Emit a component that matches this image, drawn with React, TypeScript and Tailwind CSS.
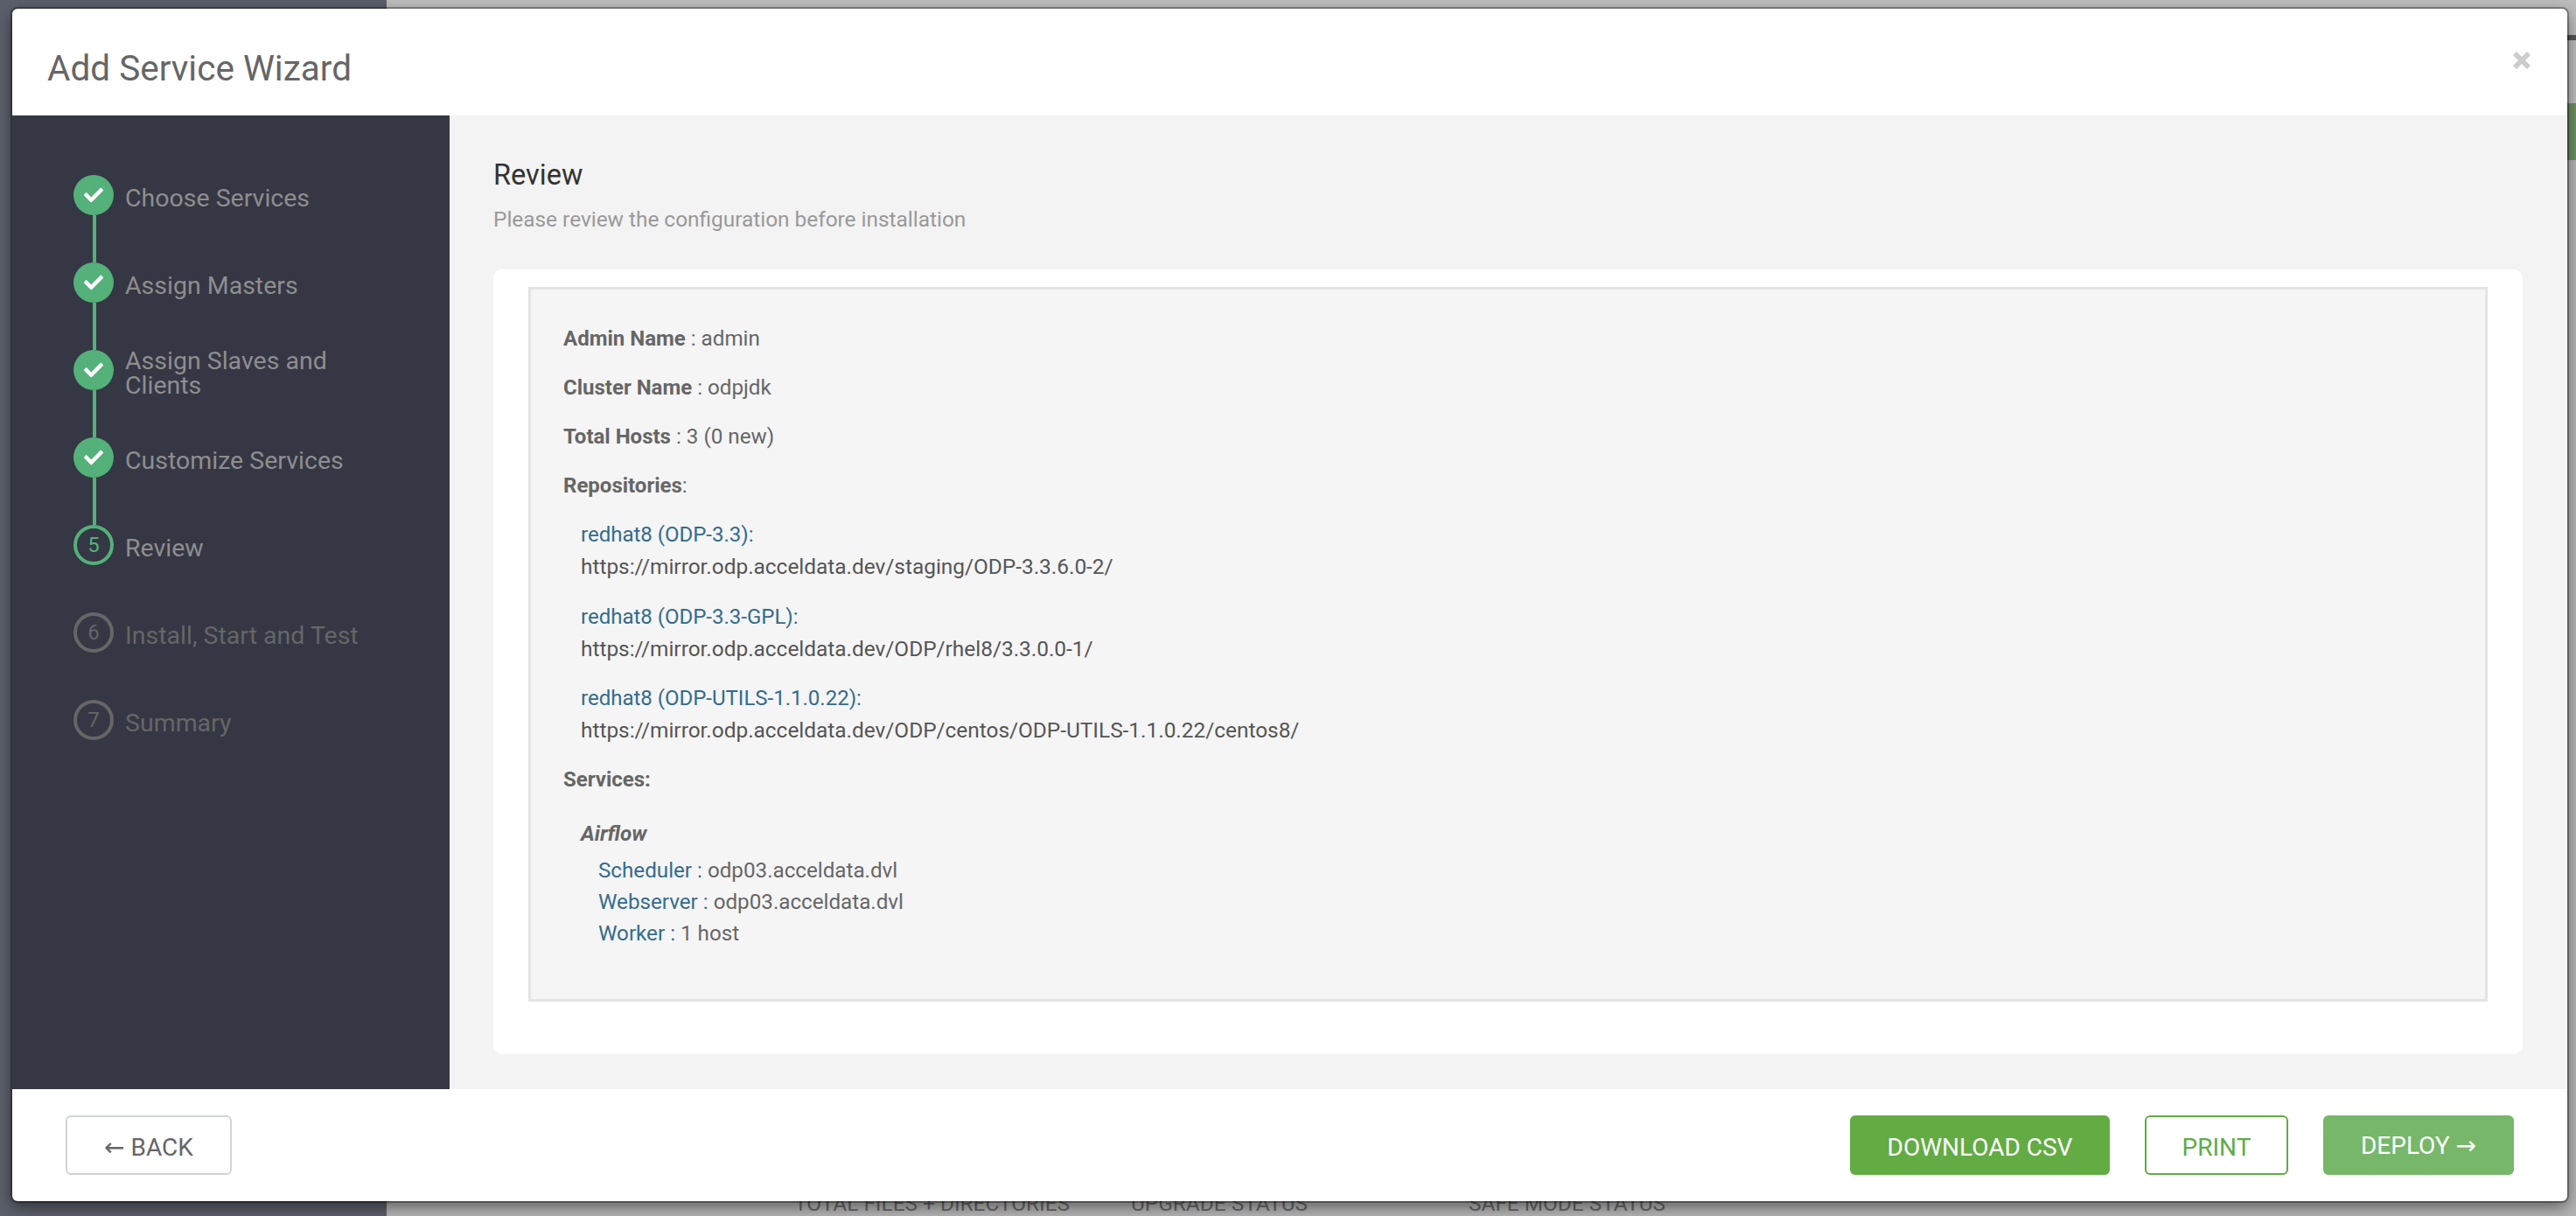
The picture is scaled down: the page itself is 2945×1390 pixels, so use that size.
import React from 'react';
import { FaCheck } from 'react-icons/fa';

const font = { fontFamily: 'Roboto, sans-serif' };
const arrowFont = { fontFamily: '"DejaVu Sans", sans-serif' };

type Step = { n: number; label: string; state: 'done' | 'current' | 'todo' };

const steps: Step[] = [
  { n: 1, label: 'Choose Services', state: 'done' },
  { n: 2, label: 'Assign Masters', state: 'done' },
  { n: 3, label: 'Assign Slaves and Clients', state: 'done' },
  { n: 4, label: 'Customize Services', state: 'done' },
  { n: 5, label: 'Review', state: 'current' },
  { n: 6, label: 'Install, Start and Test', state: 'todo' },
  { n: 7, label: 'Summary', state: 'todo' },
];

const repos = [
  { name: 'redhat8 (ODP-3.3):', url: 'https://mirror.odp.acceldata.dev/staging/ODP-3.3.6.0-2/' },
  { name: 'redhat8 (ODP-3.3-GPL):', url: 'https://mirror.odp.acceldata.dev/ODP/rhel8/3.3.0.0-1/' },
  { name: 'redhat8 (ODP-UTILS-1.1.0.22):', url: 'https://mirror.odp.acceldata.dev/ODP/centos/ODP-UTILS-1.1.0.22/centos8/' },
];

const components = [
  { name: 'Scheduler', value: 'odp03.acceldata.dvl' },
  { name: 'Webserver', value: 'odp03.acceldata.dvl' },
  { name: 'Worker', value: '1 host' },
];

function StepRow({ step, last }: { step: Step; last: boolean }) {
  return (
    <div className="relative flex h-[100px] items-start">
      {step.state === 'done' && (
        <div className="flex h-[46px] w-[46px] shrink-0 items-center justify-center rounded-full bg-[#53b179]">
          <FaCheck size={22} className="text-white" />
        </div>
      )}
      {step.state === 'current' && (
        <div className="flex h-[46px] w-[46px] shrink-0 items-center justify-center rounded-full border-4 border-[#53b179] text-[24px] text-[#53b179]">
          {step.n}
        </div>
      )}
      {step.state === 'todo' && (
        <div className="flex h-[46px] w-[46px] shrink-0 items-center justify-center rounded-full border-4 border-[#666666] text-[24px] text-[#666666]">
          {step.n}
        </div>
      )}
      {step.state === 'done' && !last && (
        <div className="absolute left-[22px] top-[46px] h-[54px] w-1 bg-[#53b179]" />
      )}
      <div
        className={`ml-[13px] mt-3 flex h-[30px] w-[280px] items-center text-[28.5px] leading-[28px] ${
          step.state === 'todo' ? 'text-[#666666]' : 'text-[#8e8e8e]'
        }`}
      >
        <span className="block">{step.label}</span>
      </div>
    </div>
  );
}

export default function App() {
  return (
    <div style={font} className="relative h-[1390px] w-[2945px] overflow-hidden bg-[#bdbdbd]">
      {/* dimmed page behind the modal */}
      <div className="flex h-full">
        <div className="h-full w-[442px] bg-[#5b5f6b]" />
        <div className="flex flex-1 flex-col">
          <div className="flex h-[124px] justify-end">
            <div className="mt-[40px] h-[6px] w-[10px] bg-[#555555]" />
          </div>
          <div className="flex h-[68px] justify-end">
            <div className="w-[12px] bg-[#6b8f60]" />
          </div>
          <div className="flex-1 bg-[#b4b4b4]">
            <div className="ml-[466px] mt-[1179px] flex text-[24.4px] leading-[28px] text-[#666666]">
              <span className="w-[385px]">TOTAL FILES + DIRECTORIES</span>
              <span className="w-[386px]">UPGRADE STATUS</span>
              <span>SAFE MODE STATUS</span>
            </div>
          </div>
        </div>
      </div>
      {/* modal */}
      <div className="absolute left-[14px] top-[10px] flex h-[1363px] w-[2921px] flex-col rounded-[6px] bg-white shadow-[0_0_0_2px_rgba(0,0,0,0.3),0_6px_18px_rgba(0,0,0,0.5)]">
        <div className="relative flex h-[122px] shrink-0 items-center pl-[40px] pt-[15px]">
          <h1 className="text-[40.5px] font-normal text-[#666666]">Add Service Wizard</h1>
          <span className="absolute right-[42px] top-[49px] text-[#cccccc]">
            <svg width="20" height="20" viewBox="0 0 20 20" className="block">
              <path d="M4 0 L10 6 L16 0 L20 4 L14 10 L20 16 L16 20 L10 14 L4 20 L0 16 L6 10 L0 4 Z" fill="currentColor" />
            </svg>
          </span>
        </div>
        <div className="flex min-h-0 flex-1">
          <aside className="w-[500px] shrink-0 bg-[#353744] pl-[70px] pt-[68px]">
            {steps.map((s, i) => (
              <StepRow key={s.n} step={s} last={i === steps.length - 1} />
            ))}
          </aside>
          <main className="flex-1 bg-[#f3f3f3] pl-[50px] pr-[51px] pt-[48px]">
            <h2 className="text-[32.5px] font-normal leading-[40px] text-[#333333]">Review</h2>
            <p className="mt-[16px] text-[24.4px] leading-[30px] text-[#999999]">Please review the configuration before installation</p>
            <div className="mt-[42px] h-[897px] rounded-[10px] bg-white px-[40px] pt-[20px]">
              <div className="h-[817px] border-[3px] border-[#e3e3e3] bg-[#f5f5f5] pl-[37px] pt-[38px] text-[24.2px] leading-[36px] text-[#666666]">
                <p><b className="text-[24px]">Admin Name</b> : admin</p>
                <p className="mt-[20px]"><b className="text-[24px]">Cluster Name</b> : odpjdk</p>
                <p className="mt-[20px]"><b className="text-[24px]">Total Hosts</b> : 3 (0 new)</p>
                <p className="mt-[20px]"><b className="text-[24px]">Repositories</b>:</p>
                <div className="ml-[20px]">
                  {repos.map((r) => (
                    <div key={r.name} className="mt-[19px]">
                      <div className="text-[24px] leading-[38px] text-[#336b8e]">{r.name}</div>
                      <div className="text-[24.4px] leading-[36.7px] text-[#555555]">{r.url}</div>
                    </div>
                  ))}
                </div>
                <p className="mt-[19px]"><b className="text-[24px]">Services:</b></p>
                <div className="ml-[20px] mt-[26px]">
                  <b className="italic">Airflow</b>
                  <div className="ml-[20px] mt-[6px]">
                    {components.map((c) => (
                      <div key={c.name}>
                        <span className="text-[#336b8e]">{c.name} : </span>
                        <span>{c.value}</span>
                      </div>
                    ))}
                  </div>
                </div>
              </div>
            </div>
          </main>
        </div>
        <div className="flex h-[128px] shrink-0 items-center justify-between pl-[61px] pr-[61px]">
          <button className="h-[68px] w-[190px] rounded-[6px] border-2 border-[#d0d3d8] pt-[5px] text-[28px] leading-[36px] text-[#666666]">
            <span style={arrowFont} className="text-[28px] leading-[28px]">←</span> BACK
          </button>
          <div className="flex items-center gap-[40px]">
            <button className="h-[68px] w-[297px] rounded-[6px] bg-[#62ac43] pt-[5px] text-[28px] text-white">DOWNLOAD CSV</button>
            <button className="h-[68px] w-[164px] rounded-[6px] border-2 border-[#62ac43] pt-[5px] text-[28px] text-[#62ac43]">PRINT</button>
            <button className="h-[68px] w-[218px] rounded-[6px] bg-[#77b769] pt-[1px] text-[28px] leading-[36px] text-white">
              DEPLOY <span style={arrowFont} className="text-[28px] leading-[28px]">→</span>
            </button>
          </div>
        </div>
      </div>
    </div>
  );
}
